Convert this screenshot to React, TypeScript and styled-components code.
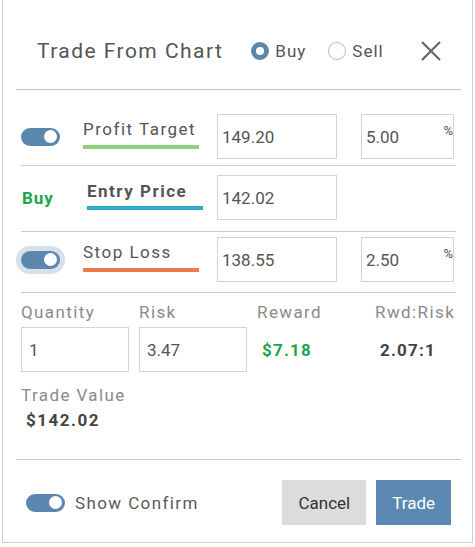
import styled, { createGlobalStyle } from "styled-components";

const GlobalStyle = createGlobalStyle`
    * {
        box-sizing: border-box;
    }
    body {
        margin: 0;
        background: #ffffff;
        font-family: Roboto, "Noto Sans", Arial, sans-serif;
    }
`

type PriceRow = {
    label: string;
    line: string;
    price: string;
    pct?: string;
    pad: string;
    focus?: boolean;
};

const rows: PriceRow[] = [
    {label: "Profit Target", line: "#8fd07c", price: "149.20", pct: "5.00", pad: "24px 0 6px"},
    {label: "Entry Price", line: "#2aaec7", price: "142.02", pad: "9px 0 11px"},
    {label: "Stop Loss", line: "#eb7a4c", price: "138.55", pct: "2.50", pad: "5px 0 10px", focus: true},
];

const App = () => {
    return (
        <>
            <GlobalStyle/>
            <Dialog>
                <Header>
                    <Title>Trade From Chart</Title>
                    <RadioGroup>
                        <RadioLabel>
                            <RadioDot $checked/>
                            Buy
                        </RadioLabel>
                        <RadioLabel>
                            <RadioDot/>
                            Sell
                        </RadioLabel>
                    </RadioGroup>
                    <CloseButton aria-label="close">
                        <svg width="20" height="20" viewBox="0 0 20 20">
                            <path d="M1 1 L19 19 M19 1 L1 19" stroke="#666" strokeWidth="2.2" fill="none"/>
                        </svg>
                    </CloseButton>
                </Header>

                <Body>
                    {rows.map((r) => (
                        <Row key={r.label} $pad={r.pad}>
                            <LeadCell>
                                {r.pct ? <Toggle $focus={r.focus}/> : <SideText>Buy</SideText>}
                            </LeadCell>
                            <LabelCell $bold={!r.pct}>
                                <FieldLabel $line={r.line} $bold={!r.pct}>{r.label}</FieldLabel>
                            </LabelCell>
                            <PriceInput defaultValue={r.price}/>
                            {r.pct && (
                                <PctBox>
                                    <PctInput defaultValue={r.pct}/>
                                    <PctSign>%</PctSign>
                                </PctBox>
                            )}
                        </Row>
                    ))}

                    <Stats>
                        <StatCol>
                            <StatLabel>Quantity</StatLabel>
                            <StatInput defaultValue="1"/>
                        </StatCol>
                        <StatCol>
                            <StatLabel>Risk</StatLabel>
                            <StatInput defaultValue="3.47"/>
                        </StatCol>
                        <StatCol>
                            <StatLabel>Reward</StatLabel>
                            <StatValue $green>$7.18</StatValue>
                        </StatCol>
                        <StatCol>
                            <StatLabel>Rwd:Risk</StatLabel>
                            <StatValue>2.07:1</StatValue>
                        </StatCol>
                    </Stats>

                    <TradeValue>
                        <StatLabel>Trade Value</StatLabel>
                        <TotalValue>$142.02</TotalValue>
                    </TradeValue>
                </Body>

                <Footer>
                    <Toggle/>
                    <ConfirmText>Show Confirm</ConfirmText>
                    <Buttons>
                        <Button>Cancel</Button>
                        <Button $primary>Trade</Button>
                    </Buttons>
                </Footer>
            </Dialog>
        </>
    );
};

export default App;

const Dialog = styled.div`
    margin-left: 2px;
    width: 471px;
    background: #ffffff;
    border: 1px solid #cfcfcf;
    border-top: none;
`

const Header = styled.div`
    display: flex;
    align-items: center;
    height: 90px;
    margin: 0 11px 0 13px;
    padding: 12px 20px 0 21px;
    border-bottom: 1px solid #c8c8c8;
`

const Title = styled.h1`
    margin: 0;
    font-size: 21px;
    font-weight: 400;
    letter-spacing: 1.45px;
    color: #555555;
`

const RadioGroup = styled.div`
    display: flex;
    align-items: center;
    gap: 22px;
    margin-left: 28px;
`

const RadioLabel = styled.label`
    display: flex;
    align-items: center;
    gap: 6px;
    font-size: 17px;
    letter-spacing: 1px;
    color: #555555;
`

const RadioDot = styled.span<{ $checked?: boolean }>`
    width: 18px;
    height: 18px;
    border-radius: 50%;
    background: #ffffff;
    border: ${p => p.$checked ? "5.5px solid #5b87ae" : "1px solid #b8b8b8"};
`

const CloseButton = styled.button`
    margin-left: auto;
    padding: 0;
    border: none;
    background: none;
    display: flex;
`

const Body = styled.div`
    margin: 0 16px 0 18px;
`

const Row = styled.div<{ $pad: string }>`
    display: flex;
    align-items: center;
    padding: ${p => p.$pad};
    border-bottom: 1px solid #cacaca;
`

const LeadCell = styled.div`
    width: 62px;
    flex: none;
    display: flex;
    align-items: center;
`

const SideText = styled.span`
    padding-left: 1px;
    font-size: 17px;
    font-weight: 700;
    letter-spacing: 1px;
    color: #20a54a;
`

const Toggle = styled.span<{ $focus?: boolean }>`
    position: relative;
    display: inline-block;
    flex: none;
    width: 39px;
    height: 18px;
    border-radius: 9px;
    background: #5b87ae;
    box-shadow: ${p => p.$focus ? "0 0 0 5px #d7e1eb" : "none"};

    &::after {
        content: "";
        position: absolute;
        top: 2.5px;
        right: 3px;
        width: 13px;
        height: 13px;
        border-radius: 50%;
        background: #ffffff;
    }
`

const LabelCell = styled.div<{ $bold?: boolean }>`
    width: 134px;
    flex: none;
    padding-left: ${p => p.$bold ? "4px" : "0"};
`

const FieldLabel = styled.div<{ $line: string; $bold?: boolean }>`
    width: 116px;
    line-height: 20px;
    font-size: 17px;
    font-weight: ${p => p.$bold ? 700 : 400};
    letter-spacing: 1.5px;
    color: #555555;
    padding-bottom: ${p => p.$bold ? "5px" : "6px"};
    margin-bottom: ${p => p.$bold ? "4px" : "5px"};
    border-bottom: 4px solid ${p => p.$line};
    white-space: nowrap;
`

const BaseInput = styled.input`
    height: 45px;
    border: 1px solid #d1d5db;
    border-radius: 0;
    padding: 0 4px;
    font-family: Roboto, "Noto Sans", Arial, sans-serif;
    font-size: 17px;
    color: #555555;
    background: #ffffff;
    outline: none;
`

const PriceInput = styled(BaseInput)`
    width: 120px;
`

const PctBox = styled.div`
    position: relative;
    margin-left: 24px;
    width: 93px;
`

const PctInput = styled(BaseInput)`
    width: 93px;
    display: block;
`

const PctSign = styled.span`
    position: absolute;
    top: 10px;
    right: 1px;
    font-size: 13px;
    line-height: 14px;
    color: #555555;
`

const Stats = styled.div`
    display: grid;
    grid-template-columns: 118px 118px 118px 1fr;
    padding-top: 9px;
`

const StatCol = styled.div`
    display: flex;
    flex-direction: column;
`

const StatLabel = styled.div`
    line-height: 20px;
    font-size: 17px;
    letter-spacing: 1.4px;
    color: #8a8a8a;
    margin-bottom: 5px;
    white-space: nowrap;
`

const StatInput = styled(BaseInput)`
    width: 108px;
    padding: 0 7px;
`

const StatValue = styled.div<{ $green?: boolean }>`
    height: 45px;
    display: flex;
    align-items: center;
    padding-left: 5px;
    font-size: 17px;
    font-weight: 700;
    letter-spacing: 1.2px;
    color: ${p => p.$green ? "#1ca64b" : "#444444"};
`

const TradeValue = styled.div`
    margin-top: 13px;
    padding-bottom: 29px;
`

const TotalValue = styled.div`
    margin-top: 4px;
    padding-left: 5px;
    line-height: 20px;
    font-size: 17px;
    font-weight: 700;
    letter-spacing: 1.5px;
    color: #444444;
`

const Footer = styled.div`
    display: flex;
    align-items: center;
    margin: 0 11px 0 13px;
    padding: 20px 10px 17px;
    border-top: 1px solid #c8c8c8;
`

const ConfirmText = styled.span`
    margin-left: 10px;
    font-size: 17px;
    letter-spacing: 1.4px;
    color: #5a5a5a;
`

const Buttons = styled.div`
    display: flex;
    gap: 10px;
    margin-left: auto;
`

const Button = styled.button<{ $primary?: boolean }>`
    height: 45px;
    padding: 0 16px;
    border: none;
    border-radius: 0;
    font-family: Roboto, "Noto Sans", Arial, sans-serif;
    font-size: 17px;
    color: ${p => p.$primary ? "#ffffff" : "#333333"};
    background: ${p => p.$primary ? "#5b89b1" : "#dcdcdc"};
`
